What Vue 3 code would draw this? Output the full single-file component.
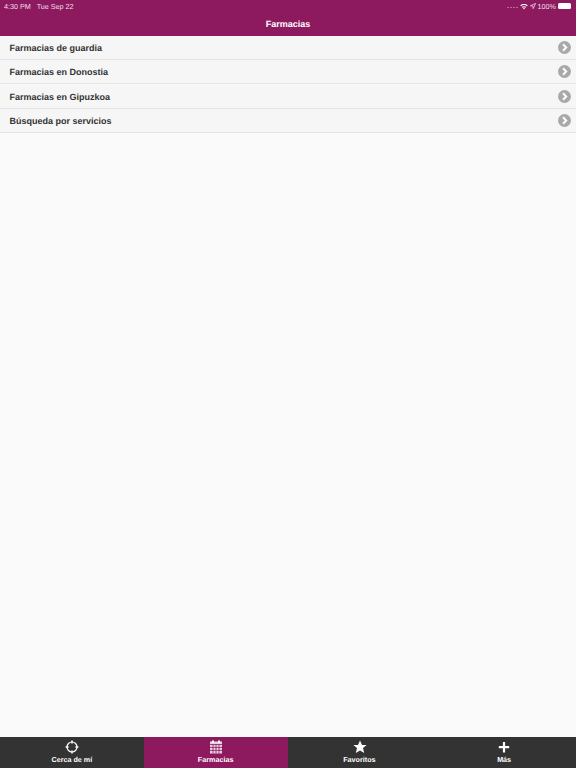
<script setup>
const rows = ['Farmacias de guardia', 'Farmacias en Donostia', 'Farmacias en Gipuzkoa', 'Búsqueda por servicios'];
const tabs = [
  {name: 'Cerca de mí', icon: 'target'},
  {name: 'Farmacias', icon: 'calendar', active: true},
  {name: 'Favoritos', icon: 'star'},
  {name: 'Más', icon: 'plus'},
];
</script>

<template>
  <div class="page">
    <header class="header">
      <div class="status">
        <span class="time">4:30 PM&nbsp;&nbsp; Tue Sep 22</span>
        <div class="status-right">
          <span class="signal"><i></i><i></i><i></i><i></i></span>
          <svg class="wifi" width="8" height="7" viewBox="0 0 10 8">
            <path d="M0.3 2.6C3 0.2 7 0.2 9.7 2.6L8.7 3.7C6.5 1.8 3.5 1.8 1.3 3.7Z" fill="#fff"/>
            <path d="M2.2 4.6C3.9 3.2 6.1 3.2 7.8 4.6L6.8 5.6C5.7 4.7 4.3 4.7 3.2 5.6Z" fill="#fff"/>
            <path d="M3.9 6.4C4.6 5.9 5.4 5.9 6.1 6.4L5 7.6Z" fill="#fff"/>
          </svg>
          <svg class="arrow" width="6" height="6" viewBox="0 0 8 8">
            <path d="M7.5 0.5L0.5 3.8L3.9 4.1L4.2 7.5Z" fill="none" stroke="#f1dfea" stroke-width="1"/>
          </svg>
          <span class="pct">100%</span>
          <span class="battery"></span>
        </div>
      </div>
      <h1 class="title">Farmacias</h1>
    </header>

    <ul class="list">
      <li v-for="row in rows" :key="row" class="row">
        <span>{{ row }}</span>
        <svg width="13" height="13" viewBox="0 0 13 13">
          <circle cx="6.5" cy="6.5" r="6.5" fill="#a8a8a8"/>
          <path d="M5 3.2L8.2 6.5L5 9.8" fill="none" stroke="#fff" stroke-width="2"/>
        </svg>
      </li>
    </ul>

    <nav class="tabs">
      <div v-for="tab in tabs" :key="tab.name" class="tab" :class="{active: tab.active}">
        <svg v-if="tab.icon === 'target'" width="14" height="14" viewBox="0 0 14 14">
          <circle cx="7" cy="7" r="5" fill="none" stroke="#fff" stroke-width="1.2"/>
          <path d="M7 0.6V3.6M7 10.4V13.4M0.6 7H3.6M10.4 7H13.4" stroke="#fff" stroke-width="1.5"/>
        </svg>
        <svg v-else-if="tab.icon === 'calendar'" width="14" height="14" viewBox="0 0 14 14">
          <path d="M1 1.5H13V13.5H1Z" fill="#e9d3e1"/>
          <path d="M3 0.5H5V3H3ZM9 0.5H11V3H9Z" fill="#fff"/>
          <path d="M1 4.5H13M1 7.4H13M1 10.4H13M4 4.5V13.5M7 4.5V13.5M10 4.5V13.5" stroke="#8d1a5f" stroke-width="0.8"/>
        </svg>
        <svg v-else-if="tab.icon === 'star'" width="15" height="14" viewBox="-0.5 0 15 14">
          <path d="M7.5 0.6L9.5 5H14.1L10.5 8.1L11.7 13L7.5 10.4L3.3 13L4.5 8.1L0.9 5H5.5Z" fill="#fff"/>
        </svg>
        <svg v-else width="14" height="14" viewBox="0 0 14 14">
          <path d="M7 2V12.5M1.8 7.2H12.2" stroke="#fff" stroke-width="2.2"/>
        </svg>
        <span class="label">{{ tab.name }}</span>
      </div>
    </nav>
  </div>
</template>

<style>
html, body {
  margin: 0;
  background: #fafafa;
}
</style>

<style scoped>
.page {
  width: 576px;
  height: 768px;
  display: flex;
  flex-direction: column;
  background: #fafafa;
  font-family: "Liberation Sans", Arial, sans-serif;
  text-rendering: geometricPrecision;
  overflow: hidden;
}

.header {
  height: 36px;
  background: #8d1a5f;
  color: #fff;
  flex: none;
}

.status {
  height: 12px;
  padding: 0 5px 0 4px;
  display: flex;
  justify-content: space-between;
  align-items: center;
  font-size: 7.2px;
  color: #f1dfea;
}

.status-right {
  display: flex;
  align-items: center;
  gap: 2px;
}

.signal {
  display: flex;
  gap: 1px;
  align-self: flex-end;
  padding-bottom: 3px;
}

.signal i {
  width: 2px;
  height: 1px;
  background: #b56a98;
}

.battery {
  width: 13px;
  height: 6px;
  background: #fff;
  border-radius: 1.5px;
}

.title {
  margin: 0;
  padding-top: 5px;
  font-size: 9px;
  font-weight: 700;
  line-height: 15px;
  text-align: center;
}

.list {
  list-style: none;
  margin: 0;
  padding: 0;
  flex: none;
}

.row {
  height: 23px;
  padding: 0 5px 0 9.5px;
  display: flex;
  justify-content: space-between;
  align-items: center;
  background: #f6f6f6;
  border-bottom: 1px solid #e4e4e4;
  font-size: 9px;
  font-weight: 700;
  color: #333;
  margin-bottom: 0.3px;
}

.row span {
  padding-top: 1px;
}

.tabs {
  margin-top: auto;
  height: 31px;
  display: flex;
  background: #333;
  flex: none;
}

.tab {
  flex: 1;
  display: flex;
  flex-direction: column;
  align-items: center;
  padding-top: 3px;
  color: #fff;
}

.tab:last-child {
  padding-left: 1px;
}

.tab.active {
  background: #8d1a5f;
}

.label {
  font-size: 7.2px;
  font-weight: 700;
  line-height: 10px;
  margin-top: 0.5px;
}
</style>
